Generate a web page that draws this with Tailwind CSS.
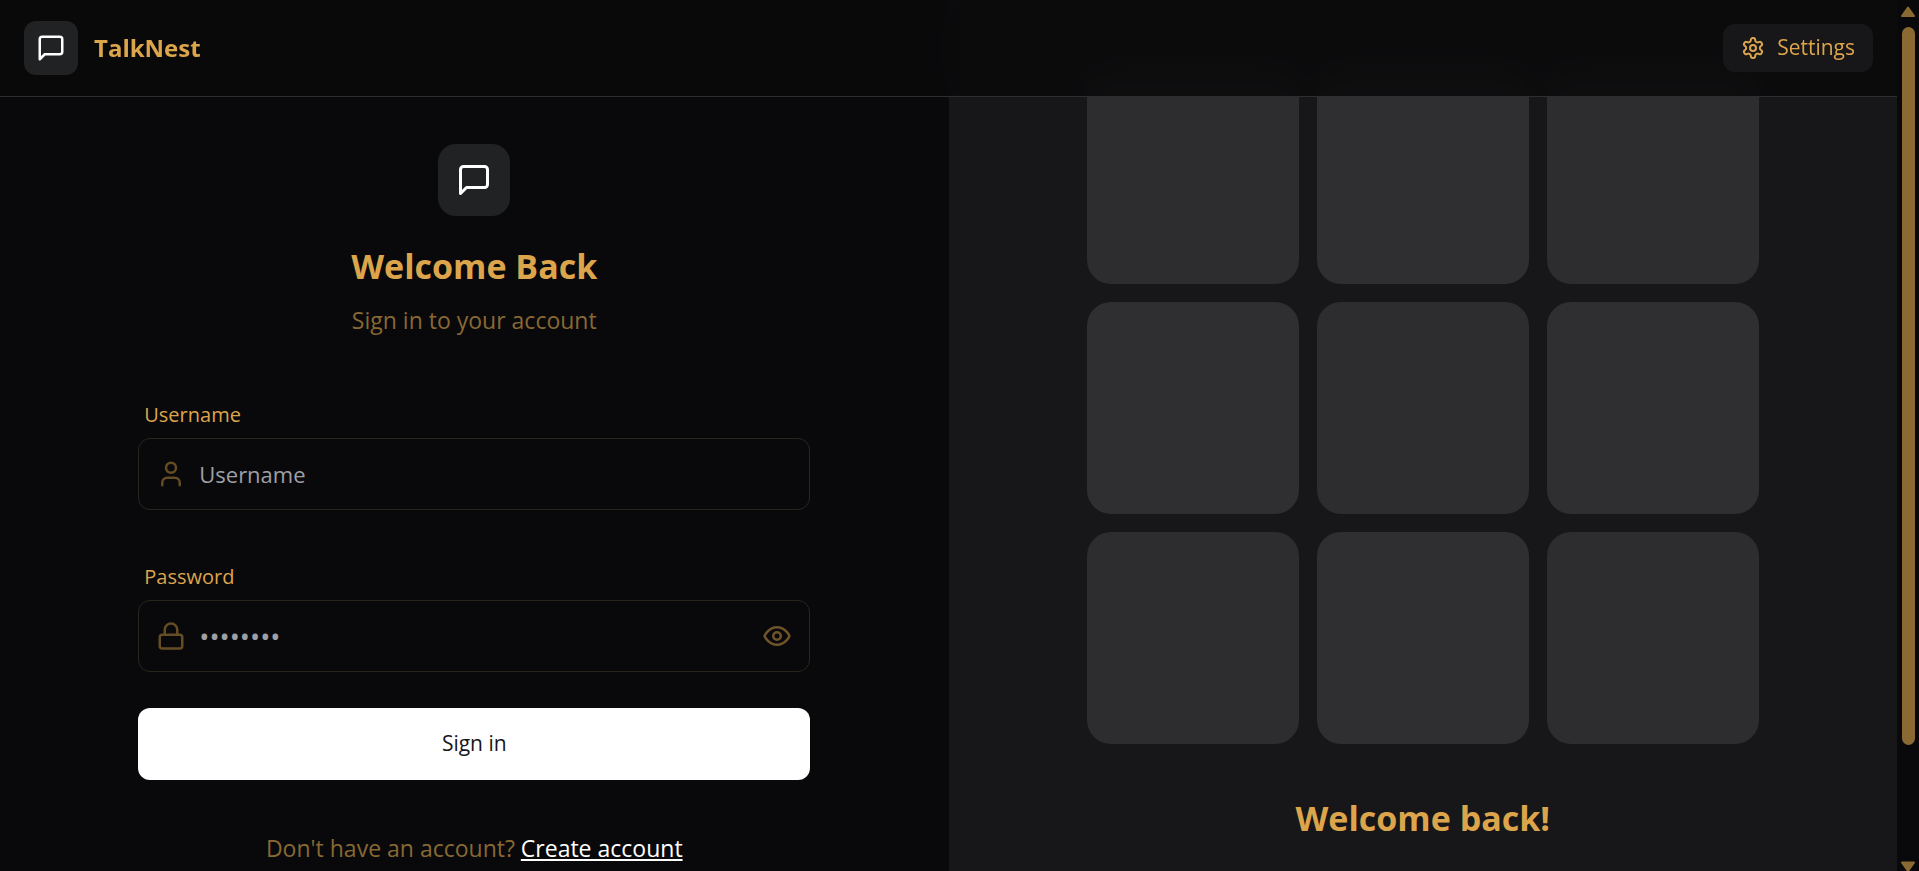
<!DOCTYPE html>
<html lang="en">
<head>
    <meta charset="UTF-8">
    <meta name="viewport" content="width=device-width, initial-scale=1.0">
    <title>TalkNest</title>
    <script src="https://cdn.jsdelivr.net/npm/@tailwindcss/browser@4"></script>
</head>
<body class="flex h-screen overflow-hidden bg-[#09090b] font-['Segoe_UI','Open_Sans',sans-serif] text-[#dca54c]">

    <div class="relative min-w-0 flex-1 overflow-hidden">

        <!-- Navbar, stays above the page content -->
        <header class="absolute inset-x-0 top-0 z-10 border-b border-[#2e2d2f] bg-[#09090b]/85 backdrop-blur-lg">
            <div class="flex h-24 items-center justify-between px-6">
                <a href="#" class="flex items-center gap-4">
                    <span class="flex size-[54px] items-center justify-center rounded-xl bg-[#212224]">
                        <svg class="size-[30px] text-white" viewBox="0 0 24 24" fill="none" stroke="currentColor" stroke-width="2" stroke-linecap="round" stroke-linejoin="round">
                            <path d="M21 15a2 2 0 0 1-2 2H7l-4 4V5a2 2 0 0 1 2-2h14a2 2 0 0 1 2 2z"/>
                        </svg>
                    </span>
                    <span class="text-2xl font-bold">TalkNest</span>
                </a>
                <button type="button" class="flex h-12 items-center gap-3 rounded-xl bg-[#171618] px-[18px] text-[21px]">
                    <svg class="size-6" viewBox="0 0 24 24" fill="none" stroke="currentColor" stroke-width="2" stroke-linecap="round" stroke-linejoin="round">
                        <path d="M12.22 2h-.44a2 2 0 0 0-2 2v.18a2 2 0 0 1-1 1.73l-.43.25a2 2 0 0 1-2 0l-.15-.08a2 2 0 0 0-2.73.73l-.22.38a2 2 0 0 0 .73 2.73l.15.1a2 2 0 0 1 1 1.72v.51a2 2 0 0 1-1 1.74l-.15.09a2 2 0 0 0-.73 2.73l.22.38a2 2 0 0 0 2.73.73l.15-.08a2 2 0 0 1 2 0l.43.25a2 2 0 0 1 1 1.73V20a2 2 0 0 0 2 2h.44a2 2 0 0 0 2-2v-.18a2 2 0 0 1 1-1.73l.43-.25a2 2 0 0 1 2 0l.15.08a2 2 0 0 0 2.73-.73l.22-.39a2 2 0 0 0-.73-2.73l-.15-.08a2 2 0 0 1-1-1.74v-.5a2 2 0 0 1 1-1.74l.15-.09a2 2 0 0 0 .73-2.73l-.22-.38a2 2 0 0 0-2.73-.73l-.15.08a2 2 0 0 1-2 0l-.43-.25a2 2 0 0 1-1-1.73V4a2 2 0 0 0-2-2z"/>
                        <circle cx="12" cy="12" r="3"/>
                    </svg>
                    Settings
                </button>
            </div>
        </header>

        <main class="grid min-h-full grid-cols-2">

            <!-- Login form -->
            <section class="flex flex-col items-center px-12 pt-36">
                <div class="w-full max-w-[672px]">
                    <div class="flex flex-col items-center text-center">
                        <div class="flex size-[72px] items-center justify-center rounded-[18px] bg-[#212224]">
                            <svg class="size-9 text-white" viewBox="0 0 24 24" fill="none" stroke="currentColor" stroke-width="2" stroke-linecap="round" stroke-linejoin="round">
                                <path d="M21 15a2 2 0 0 1-2 2H7l-4 4V5a2 2 0 0 1 2-2h14a2 2 0 0 1 2 2z"/>
                            </svg>
                        </div>
                        <h1 class="mt-7 text-[34px] leading-[44px] font-bold">Welcome Back</h1>
                        <p class="mt-4 text-[23px] leading-8 text-[#886833]">Sign in to your account</p>
                    </div>

                    <form class="mt-16">
                        <label for="username" class="block pl-1.5 text-[20px] leading-[30px]">Username</label>
                        <div class="relative mt-2">
                            <svg class="pointer-events-none absolute top-1/2 left-[18px] size-[30px] -translate-y-1/2 text-[#644d24]" viewBox="0 0 24 24" fill="none" stroke="currentColor" stroke-width="2" stroke-linecap="round" stroke-linejoin="round">
                                <path d="M19 21v-2a4 4 0 0 0-4-4H9a4 4 0 0 0-4 4v2"/>
                                <circle cx="12" cy="7" r="4"/>
                            </svg>
                            <input id="username" type="text" placeholder="Username" class="h-[72px] w-full rounded-xl border border-[#2a251c] bg-transparent pr-4 pl-[60px] text-[22px] placeholder:text-[#9fa0a5]">
                        </div>

                        <label for="password" class="mt-[52px] block pl-1.5 text-[20px] leading-[30px]">Password</label>
                        <div class="relative mt-2">
                            <svg class="pointer-events-none absolute top-1/2 left-[18px] size-[30px] -translate-y-1/2 text-[#644d24]" viewBox="0 0 24 24" fill="none" stroke="currentColor" stroke-width="2" stroke-linecap="round" stroke-linejoin="round">
                                <rect x="3" y="11" width="18" height="11" rx="2"/>
                                <path d="M7 11V7a5 5 0 0 1 10 0v4"/>
                            </svg>
                            <input id="password" type="password" placeholder="••••••••" class="h-[72px] w-full rounded-xl border border-[#2a251c] bg-transparent pr-14 pl-[60px] text-[27px] placeholder:text-[#9fa0a5]">
                            <button type="button" aria-label="Show password" class="absolute inset-y-0 right-[18px] flex items-center text-[#6f5429]">
                                <svg class="size-[30px]" viewBox="0 0 24 24" fill="none" stroke="currentColor" stroke-width="2" stroke-linecap="round" stroke-linejoin="round">
                                    <path d="M2 12s3-7 10-7 10 7 10 7-3 7-10 7-10-7-10-7z"/>
                                    <circle cx="12" cy="12" r="3"/>
                                </svg>
                            </button>
                        </div>

                        <button type="submit" class="mt-9 h-[72px] w-full rounded-xl bg-white text-[21px] text-[#171618]">Sign in</button>
                    </form>

                    <p class="mt-[52px] text-center text-[23px] leading-8 whitespace-nowrap text-[#886833]">
                        Don't have an account?
                        <a href="#" class="text-white underline">Create account</a>
                    </p>
                </div>
            </section>

            <!-- Decorative pattern -->
            <section class="flex flex-col items-center bg-[#171618] px-12 pt-[72px]">
                <div class="w-full max-w-[672px] text-center">
                    <div class="grid grid-cols-3 gap-[18px]">
                        <div class="aspect-square rounded-3xl bg-[#2d2d2f]"></div>
                        <div class="aspect-square rounded-3xl bg-[#2f2f31]"></div>
                        <div class="aspect-square rounded-3xl bg-[#2d2d2f]"></div>
                        <div class="aspect-square rounded-3xl bg-[#2f2f31]"></div>
                        <div class="aspect-square rounded-3xl bg-[#2d2d2f]"></div>
                        <div class="aspect-square rounded-3xl bg-[#2f2f31]"></div>
                        <div class="aspect-square rounded-3xl bg-[#2d2d2f]"></div>
                        <div class="aspect-square rounded-3xl bg-[#2f2f31]"></div>
                        <div class="aspect-square rounded-3xl bg-[#2d2d2f]"></div>
                    </div>
                    <h2 class="mt-[52px] text-[34px] leading-[44px] font-bold">Welcome back!</h2>
                </div>
            </section>
        </main>
    </div>

    <!-- Scrollbar -->
    <div class="flex w-[22px] shrink-0 flex-col items-center overflow-hidden bg-[#09090b] pt-1.5 text-[#8a6932]">
        <svg class="h-[11px] w-[14px] shrink-0" viewBox="0 0 14 11" fill="currentColor" stroke="currentColor" stroke-width="2" stroke-linejoin="round">
            <path d="M7 1.5 13 10H1z"/>
        </svg>
        <div class="mt-2.5 mb-[116px] w-[13px] flex-1 rounded-full bg-[#8a6932]"></div>
        <svg class="h-[10px] w-[14px] shrink-0" viewBox="0 0 14 10" fill="currentColor" stroke="currentColor" stroke-width="2" stroke-linejoin="round">
            <path d="M1 1.5h12L7 10z"/>
        </svg>
    </div>

</body>
</html>
